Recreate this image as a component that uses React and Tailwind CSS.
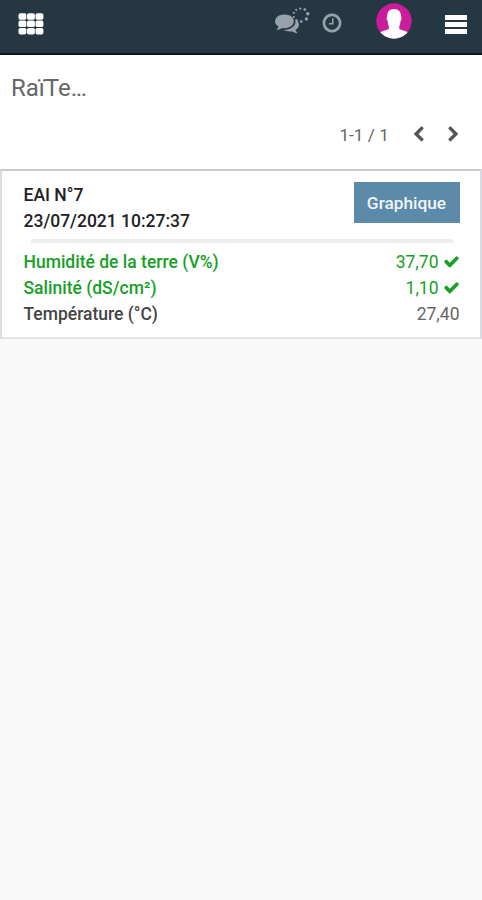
import React from 'react';

const PATHS = {
    check: 'M1671 566q0 40-28 68l-724 724-136 136q-28 28-68 28t-68-28l-136-136-362-362q-28-28-28-68t28-68l136-136q28-28 68-28t68 28l294 295 656-657q28-28 68-28t68 28l136 136q28 28 28 68z',
    left: 'M1427 301l-531 531 531 531q19 19 19 45t-19 45l-166 166q-19 19-45 19t-45-19l-742-742q-19-19-19-45t19-45l742-742q19-19 45-19t45 19l166 166q19 19 19 45t-19 45z',
    clock: 'M1024 544v448q0 14-9 23t-23 9h-320q-14 0-23-9t-9-23v-64q0-14 9-23t23-9h224v-352q0-14 9-23t23-9h64q14 0 23 9t9 23zm416 352q0-148-73-273t-198-198-273-73-273 73-198 198-73 273 73 273 198 198 273 73 273-73 198-198 73-273zm224 0q0 209-103 385.5t-279.5 279.5-385.5 103-385.5-103-279.5-279.5-103-385.5 103-385.5 279.5-279.5 385.5-103 385.5 103 279.5 279.5 103 385.5z',
    comments: 'M1408 768q0 139-94 257t-256.5 186.5-353.5 68.5q-86 0-176-16-124 88-278 128-36 9-86 16h-3q-11 0-20.5-8t-11.5-21q-1-3-1-6.5t.5-6.5 2-6l2.5-5 3.5-5.5 4-5 4.5-5 4-4.5q5-6 23-25t26-29.5 22.5-29 25-38.5 20.5-44q-124-72-195-177t-71-224q0-139 94-257t256.5-186.5 353.5-68.5 353.5 68.5 256.5 186.5 94 257zm384 256q0 120-71 224.5t-195 176.5q10 24 20.5 44t25 38.5 22.5 29 26 29.5 23 25q1 1 4 4.5t4.5 5 4 5 3.5 5.5l2.5 5 2 6 .5 6.5-1 6.5q-3 14-13 22t-22 7q-50-7-86-16-154-40-278-128-90 16-176 16-271 0-472-132 58 4 88 4 161 0 309-45t264-129q125-92 192-212t67-254q0-77-23-152 129 71 204 178t75 230z',
};

const Icon = ({ name, className }) => (
    <svg viewBox="0 0 1792 1792" fill="currentColor" className={className} aria-hidden="true">
        <path d={PATHS[name]} />
    </svg>
);

const AppsIcon = () => (
    <svg viewBox="0 0 26 22" fill="currentColor" className="w-[26px] h-[22px]">
        {[0.3, 7.6, 14.9].map((y) => [0.5, 9, 17.5].map((x) => (
            <rect key={`${x}-${y}`} x={x} y={y} width="7.900" height="6.500" rx="1.900" />
        )))}
    </svg>
);

// Dots of the loading ring, [x, y, radius]
const DOTS = [
    [8.2, 1.6, 1.1], [12.8, 2.6, 1.4], [15.8, 6.8, 1.8], [14.4, 12, 1.7], [9.2, 14.6, 1.4],
    [4.6, 13.4, 1.2], [1.8, 10, 1.1], [1.8, 5.8, 1.1], [4.2, 2.8, 1.1],
];

const Spinner = () => (
    <svg viewBox="0 0 18 18" fill="currentColor" className="absolute left-[17px] -top-[4px] w-[18px] h-[18px]">
        {DOTS.map(([x, y, r]) => <circle key={`${x}-${y}`} cx={x} cy={y} r={r} />)}
    </svg>
);

const Avatar = () => (
    <svg viewBox="0 0 36 36" className="w-9 h-9">
        <defs>
            <clipPath id="avatar"><circle cx="18" cy="18" r="17.7" /></clipPath>
        </defs>
        <g clipPath="url(#avatar)">
            <rect width="36" height="36" fill="#cb1c9b" />
            <path
                fill="#fff"
                d="M18 6c4.700 0 7 3 7 7 0 1 .6 1.300.5 2.400-.1 1.500-.8 1.900-1 2.800-.2 2.500-.6 3.800-1.200 4.800v2.600c0 1 1.800 1.300 4.200 2 3.200.9 5.200 2 6.700 3.900V38H2v-6.500c1.500-1.900 3.500-3 6.700-3.900 2.400-.7 4.200-1 4.200-2v-2.600c-.6-1-1-2.300-1.200-4.800-.2-.9-.9-1.300-1-2.800-.1-1.100.5-1.400.5-2.400C11.200 9 13.300 6 18 6z"
            />
        </g>
    </svg>
);

const READINGS = [
    { label: 'Humidité de la terre (V%)', value: '37,70', ok: true },
    { label: 'Salinité (dS/cm²)', value: '1,10', ok: true },
    { label: 'Température (°C)', value: '27,40', ok: false },
];

const Navbar = () => (
    <header className="flex h-[55px] items-start border-b-2 border-[#0b151c] bg-[#243742] pl-[18px] pr-[15px] text-white">
        <div className="mt-[13px]"><AppsIcon /></div>
        <div className="ml-auto flex text-[#97a1aa]">
            <div className="relative mt-[11px] mr-[22px] h-6 w-6">
                <Icon name="comments" className="h-6 w-6" />
                <Spinner />
            </div>
            <Icon name="clock" className="mt-[12px] h-[22px] w-[22px]" />
        </div>
        <div className="ml-[32.5px] mt-[3px]"><Avatar /></div>
        <div className="ml-[33.5px] mt-[15px] flex w-[22px] flex-col gap-[2px]">
            <span className="h-[5px] bg-white" />
            <span className="h-[5px] bg-white" />
            <span className="h-[5px] bg-white" />
        </div>
    </header>
);

const ControlPanel = () => (
    <div className="h-[114px] bg-white">
        <h1 className="pl-[11px] pt-[17px] text-[24px] leading-8 text-[#666]">RaïTe…</h1>
        <div className="mt-[18px] flex items-center justify-end pr-[20px] text-[#555]">
            <span className="mr-[21px] pt-px text-[17.3px] leading-6 text-[#666]">1-1 / 1</span>
            <Icon name="left" className="mr-[18px] h-[17px] w-[17px]" />
            <Icon name="left" className="h-[17px] w-[17px] -scale-x-100" />
        </div>
    </div>
);

const Card = () => (
    <section className="h-[170px] border-2 border-t-[#c9cacd] border-x-[#dadae4] border-b-[#e3e4e8] bg-white pl-[21.5px] pr-[20.5px] pt-[11px] text-[17.5px] leading-[26px]">
        <div className="flex justify-between">
            <div className="font-medium text-[#222]">
                <div>EAI N°7</div>
                <div>23/07/2021 10:27:37</div>
            </div>
            <button className="h-[41px] w-[106px] bg-[#5b8ba8] text-[17.3px] font-medium text-[#eef5fa]">Graphique</button>
        </div>
        <hr className="mx-[7px] mt-[5px] mb-[6px] border-0 h-[4px] bg-[#eeeeee]" />
        {READINGS.map(({ label, value, ok }) => (
            <div key={label} className={`flex justify-between ${ok ? 'text-[#16a026]' : 'text-[#444]'}`}>
                <span className="font-medium">{label}</span>
                <span className={`flex items-center ${ok ? '' : 'text-[#666]'}`}>
                    {value}
                    {ok && <Icon name="check" className="ml-[4px] mb-[2px] h-[17px] w-[17px]" />}
                </span>
            </div>
        ))}
    </section>
);

export default function App() {
    return (
        <div className="min-h-screen bg-[#f9f9f9] font-['Roboto',sans-serif]">
            <Navbar />
            <ControlPanel />
            <Card />
        </div>
    );
}
